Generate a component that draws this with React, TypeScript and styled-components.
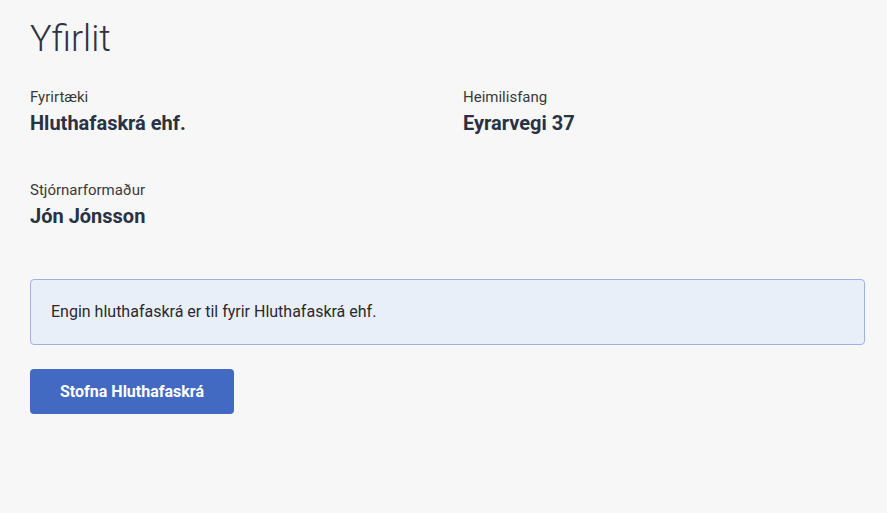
import styled, { createGlobalStyle } from "styled-components";

const GlobalStyle = createGlobalStyle`
  body {
    margin: 0;
    background: #f7f7f7;
    font-family: Roboto, "Liberation Sans", sans-serif;
  }
`;

const fields = [
  { label: "Fyrirtæki", value: "Hluthafaskrá ehf." },
  { label: "Heimilisfang", value: "Eyrarvegi 37" },
  { label: "Stjórnarformaður", value: "Jón Jónsson" },
];

export default function App() {
  return (
    <>
      <GlobalStyle />
      <Page>
        <Title>Yfirlit</Title>
        <Details>
          {fields.map((f) => (
            <Field key={f.label}>
              <Label>{f.label}</Label>
              <Value>{f.value}</Value>
            </Field>
          ))}
        </Details>
        <Notice>Engin hluthafaskrá er til fyrir Hluthafaskrá ehf.</Notice>
        <Button type="button">Stofna Hluthafaskrá</Button>
      </Page>
    </>
  );
}

const Page = styled.main`
  padding: 17px 22px 0 30px;
  display: flex;
  flex-direction: column;
  align-items: flex-start;
`;

const Title = styled.h1`
  margin: 0;
  font-size: 36px;
  line-height: 44px;
  font-weight: 300;
  color: #2c3345;
`;

const Details = styled.div`
  align-self: stretch;
  display: grid;
  grid-template-columns: 433px 1fr;
  row-gap: 45px;
  margin-top: 26px;
`;

const Field = styled.div`
  display: flex;
  flex-direction: column;
  gap: 4px;
`;

const Label = styled.span`
  font-size: 15px;
  line-height: 20px;
  color: #3a3a3a;
`;

const Value = styled.span`
  font-size: 20px;
  line-height: 24px;
  font-weight: 700;
  color: #283244;
`;

const Notice = styled.div`
  align-self: stretch;
  margin-top: 51px;
  padding: 0 20px;
  display: flex;
  align-items: center;
  box-sizing: border-box;
  height: 66px;
  background: #e9eff9;
  border: 1px solid #9db3e4;
  border-radius: 4px;
  font-size: 16px;
  line-height: 20px;
  color: #2a2a2a;
`;

const Button = styled.button`
  margin-top: 24px;
  width: 204px;
  height: 45px;
  border: none;
  border-radius: 4px;
  background: #426ac2;
  color: #ffffff;
  font-family: Roboto, "Liberation Sans", sans-serif;
  font-size: 16px;
  font-weight: 700;
  cursor: pointer;
`;
